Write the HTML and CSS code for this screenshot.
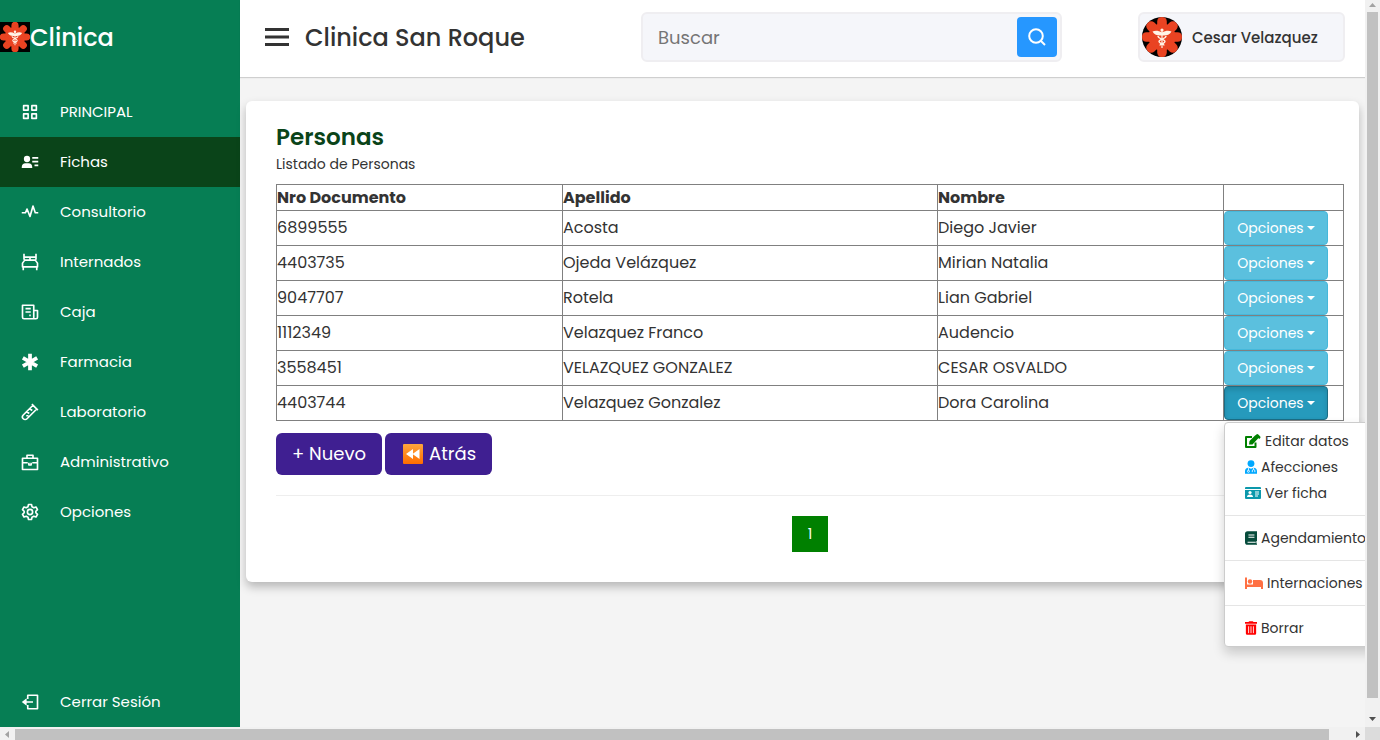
FILE: index.html
```html
<!DOCTYPE html>
<html lang="es">
<head>
<meta charset="utf-8">
<title>Clinica San Roque - Personas</title>
<link rel="stylesheet" href="styles.css">
</head>
<body>
<svg class="defs" aria-hidden="true">
  <symbol id="flower" viewBox="0 0 40 40">
    <rect width="40" height="40" fill="#000"/>
    <g stroke="#e94322" stroke-width="9.6" stroke-linecap="round">
      <path d="M20 4.500v31M4.500 20h31M9 9l22 22M31 9L9 31"/>
    </g>
    <circle cx="20" cy="20" r="13.500" fill="#e94322"/>
    <g fill="#fff3e6">
      <circle cx="20" cy="13" r="1.600"/>
      <path d="M10.500 14.500c3-1.500 6-1 9.500 1 3.500-2 6.500-2.500 9.500-1-1.500 2.500-3.500 4-7.500 4h-4c-4 0-6-1.500-7.500-4z"/>
      <path d="M19.400 14h1.200v17h-1.200z"/>
    </g>
    <path d="M16 19c0 3 7 3 7 5.500s-5 1.500-5 4M24 19c0 3-7 3-7 5.500s5 1.500 5 4" fill="none" stroke="#fff3e6" stroke-width="1.400"/>
  </symbol>
</svg>
<div class="viewport">
  <div class="app">
    <nav class="sidebar" aria-label="Menú principal">
      <div class="brand"><svg class="brand-logo" role="img" aria-label="Logo"><use href="#flower"/></svg><span>Clinica</span></div>
      <ul class="menu">
        <li><a class="link" href="#"><svg class="ico" viewBox="0 0 24 24"><path d="M3.500 3.500h6v6h-6zM14.500 3.500h6v6h-6zM3.500 14.500h6v6h-6zM14.500 14.500h6v6h-6z"/></svg>PRINCIPAL</a></li>
        <li><a class="link active" href="#"><svg class="ico" viewBox="0 0 24 24"><g class="solid"><circle cx="8" cy="8" r="4.200"/><path d="M1 20v-1c0-3.500 2-5.500 5-5.500h4c3 0 5 2 5 5.500v1z"/></g><path d="M15 6.500h8M15 11.500h8M18 16.500h5"/></svg>Fichas</a></li>
        <li><a class="link" href="#"><svg class="ico" viewBox="0 0 24 24"><path d="M1 13h5l2-5 4 10 4-14 3 9h4"/></svg>Consultorio</a></li>
        <li><a class="link" href="#"><svg class="ico" viewBox="0 0 24 24"><path d="M4 1v8M20 1v8M4 5.500h16M12 5.500v4M5 9.500h14l3 4v5H2v-5zM3 18v5M21 18v5"/></svg>Internados</a></li>
        <li><a class="link" href="#"><svg class="ico" viewBox="0 0 24 24"><path d="M2 3h15v18H4q-2 0-2-2zM17 10h5v9q0 2-2 2h-3M6 7.500h7M6 12h7M11 16.500h2"/></svg>Caja</a></li>
        <li><a class="link" href="#"><svg class="ico" viewBox="0 0 24 24"><path class="thick" d="M12 1v22M2.500 6.500l19 11M21.500 6.500l-19 11"/></svg>Farmacia</a></li>
        <li><a class="link" href="#"><svg class="ico" viewBox="0 0 24 24"><path d="M14.500 1.500l8 8M16 3L3 16a3.500 3.500 0 0 0 5 5L21 8M8 12l3 2M12 8l3 2M7 17h3"/></svg>Laboratorio</a></li>
        <li><a class="link" href="#"><svg class="ico" viewBox="0 0 24 24"><path d="M2 7h20v15H2zM8 7V3h8v4M2 13h7M15 13h7M10.500 13v3h3v-3"/></svg>Administrativo</a></li>
        <li><a class="link" href="#"><svg class="ico" viewBox="0 0 24 24"><path d="M10 2h4l.7 3 2.300 1.300 3-1 2 3.500L19.800 11v2l2.200 2.200-2 3.500-3-1-2.300 1.300-.7 3h-4l-.7-3L7 17.700l-3 1-2-3.500L4.200 13v-2L2 8.800l2-3.500 3 1L9.300 5z"/><circle cx="12" cy="12" r="3.500"/></svg>Opciones</a></li>
      </ul>
      <a class="link logout" href="#"><svg class="ico" viewBox="0 0 24 24"><path d="M9 8V3h13v18H9v-5M16 12H3"/><path class="solid" d="M7.500 7v10L1 12z"/></svg>Cerrar Sesión</a>
    </nav>
    <div class="page">
      <header class="topbar">
        <div class="heading">
          <button class="toggle" aria-label="Menú"><svg viewBox="0 0 26 18"><path d="M1 1.500h24M1 9h24M1 16.500h24"/></svg></button>
          <span class="clinic">Clinica San Roque</span>
        </div>
        <form class="search">
          <input type="text" placeholder="Buscar" aria-label="Buscar">
          <button type="button" aria-label="Buscar"><svg viewBox="0 0 20 20"><circle cx="9" cy="9" r="6.800"/><path d="M14 14l4 4"/></svg></button>
        </form>
        <div class="profile"><svg class="avatar" role="img" aria-label="Foto de perfil"><use href="#flower"/></svg><span>Cesar Velazquez</span></div>
      </header>
      <main class="card">
        <h1>Personas</h1>
        <p class="subtitle">Listado de Personas</p>
        <table class="people">
          <colgroup><col class="c-doc"><col><col class="c-name"><col class="c-act"></colgroup>
          <thead><tr><th>Nro Documento</th><th>Apellido</th><th>Nombre</th><th></th></tr></thead>
          <tbody>
            <tr><td>6899555</td><td>Acosta</td><td>Diego Javier</td><td><button class="opt">Opciones<i class="caret"></i></button></td></tr>
            <tr><td>4403735</td><td>Ojeda Velázquez</td><td>Mirian Natalia</td><td><button class="opt">Opciones<i class="caret"></i></button></td></tr>
            <tr><td>9047707</td><td>Rotela</td><td>Lian Gabriel</td><td><button class="opt">Opciones<i class="caret"></i></button></td></tr>
            <tr><td>1112349</td><td>Velazquez Franco</td><td>Audencio</td><td><button class="opt">Opciones<i class="caret"></i></button></td></tr>
            <tr><td>3558451</td><td>VELAZQUEZ GONZALEZ</td><td>CESAR OSVALDO</td><td><button class="opt">Opciones<i class="caret"></i></button></td></tr>
            <tr><td>4403744</td><td>Velazquez Gonzalez</td><td>Dora Carolina</td><td>
              <div class="dropdown">
                <button class="opt open" aria-expanded="true">Opciones<i class="caret"></i></button>
                <ul class="dropdown-menu">
                  <li><a href="#"><svg class="w16 green" viewBox="0 0 16 14"><path d="M10.500 8.500V13H1V3h6" fill="none" stroke="currentColor" stroke-width="2" stroke-linejoin="round"/><path d="M4 10.500l.5-3.500 6-6 3 3-6 6.500zM11.300.6q1-1 2 0l1.700 1.700q1 1 0 2L14.300 5l-3.500-3.500z"/></svg>Editar datos</a></li>
                  <li><a href="#"><svg class="w13 sky" viewBox="0 0 14 16"><circle cx="7" cy="4" r="4"/><path d="M0 16v-3c0-2.500 1.500-4 4-4l3 1 3-1c2.500 0 4 1.500 4 4v3z"/><path d="M4 9v3M10 9v2M8.500 14v-1.500q0-1.500 1.500-1.500t1.500 1.500V14" fill="none" stroke="#fff"/><circle cx="4" cy="13" r="1.200" fill="none" stroke="#fff"/></svg>Afecciones</a></li>
                  <li><a href="#"><svg class="w16 teal" viewBox="0 0 16 14"><path d="M1 1h14q1 0 1 1v10q0 1-1 1H1q-1 0-1-1V2q0-1 1-1z"/><path d="M0 3.500h16M10 6h4M10 8h4M10 10h3" stroke="#fff"/><circle cx="5" cy="6.500" r="1.600" fill="#fff"/><path d="M2 11q0-2.500 3-2.500T8 11z" fill="#fff"/></svg>Ver ficha</a></li>
                  <li class="divider"></li>
                  <li><a href="#"><svg class="w13 forest" viewBox="0 0 14 16"><path d="M3 0h11v11.500h-.7v3h.7V16H3q-3 0-3-3V3q0-3 3-3z"/><path d="M4 4.500h7M4 7h7M3 13h9.500" stroke="#fff" stroke-width="1.200"/></svg>Agendamiento</a></li>
                  <li class="divider"></li>
                  <li><a href="#"><svg class="w18 coral" viewBox="0 0 18 14"><path d="M0 1.500h2v7h6V4h7q3 0 3 3v6h-2v-2H2v2H0z"/><circle cx="5" cy="5.500" r="2.200"/></svg>Internaciones</a></li>
                  <li class="divider"></li>
                  <li><a href="#"><svg class="w13 red" viewBox="0 0 14 16"><path d="M0 1h4l1-1h4l1 1h4v2H0zM1 4h12v10.500q0 1.500-1.500 1.500h-9Q1 16 1 14.500z"/><path d="M4.200 6v8M7 6v8M9.800 6v8" stroke="#fff"/></svg>Borrar</a></li>
                </ul>
              </div>
            </td></tr>
          </tbody>
        </table>
        <div class="actions">
          <a class="btn" href="#">+ Nuevo</a>
          <a class="btn" href="#"><svg class="rewind" viewBox="0 0 20 20"><defs><linearGradient id="og" x2="0" y2="1"><stop stop-color="#ffa63d"/><stop offset="1" stop-color="#ff6d00"/></linearGradient></defs><rect width="20" height="20" rx="1" fill="url(#og)"/><path d="M10 5v10l-7-5zM16.500 5v10l-7-5z" fill="#fff"/></svg>Atrás</a>
        </div>
        <div class="pager"><a href="#" aria-current="page">1</a></div>
      </main>
    </div>
  </div>
  <div class="vbar" aria-hidden="true">
    <svg viewBox="0 0 15 12"><path d="M7.500 3l3.500 4H4z" fill="#a3a3a3"/></svg>
    <div class="thumb"></div>
    <svg viewBox="0 0 15 12"><path d="M7.500 8L11 4H4z" fill="#505050"/></svg>
  </div>
  <div class="hbar" aria-hidden="true">
    <svg viewBox="0 0 15 13"><path d="M5 7.500L9 4v7z" fill="#a3a3a3"/></svg>
    <div class="thumb"></div>
    <svg viewBox="0 0 15 13"><path d="M10 7.500L6 4v7z" fill="#505050"/></svg>
  </div>
  <div class="corner"></div>
</div>
</body>
</html>
```
FILE: styles.css
```css
* { box-sizing: border-box; margin: 0; padding: 0; }
body { font-family: Poppins, Inter, sans-serif; font-size: 16px; color: #333; background: #f4f4f4; }
ul { list-style: none; }
a { text-decoration: none; color: inherit; }
button, input { font: inherit; border: 0; }
.defs { position: absolute; width: 0; height: 0; }

.viewport { display: grid; grid-template-columns: minmax(0, 1fr) 15px; grid-template-rows: minmax(0, 1fr) 13px; height: 100vh; }
.app { display: flex; overflow: hidden; }

.sidebar { flex: none; width: 240px; display: flex; flex-direction: column; background: #067e54; color: #fff; }
.brand { display: flex; align-items: center; height: 74px; margin-bottom: 13px; font-size: 24px; font-weight: 500; }
.brand-logo { width: 30px; height: 30px; }
.link { display: flex; align-items: center; height: 50px; padding-bottom: 1px; font-size: 15px; }
.link.active { background: #0a4419; }
.logout { margin-top: auto; }
.ico { width: 18px; height: 18px; margin: 0 21px; fill: none; stroke: #fff; stroke-width: 2.2; stroke-linejoin: round; flex: none; }
.ico .solid { fill: #fff; stroke: none; }
.ico .thick { stroke-width: 5; }

.page { flex: 1; min-width: 0; }
.topbar { display: flex; align-items: center; gap: 76px; padding: 12px 20px 15px; background: #fff; box-shadow: 0 1px 1px rgba(0, 0, 0, .15); }
.heading { display: flex; align-items: center; min-width: 305px; }
.toggle { width: 34px; height: 34px; margin-right: 11px; background: none; display: flex; align-items: center; justify-content: center; }
.toggle svg { width: 26px; height: 18px; fill: none; stroke: #333; stroke-width: 3; }
.clinic { font-size: 24px; font-weight: 500; white-space: nowrap; }
.search { flex: 1; min-width: 0; display: flex; align-items: center; height: 50px; padding: 0 3px 0 0; background: #f5f6fa; border: 2px solid #efeef1; border-radius: 6px; }
.search input { flex: 1; min-width: 0; height: 46px; padding: 0 15px; font-size: 18px; background: none; }
.search input::placeholder { color: #757575; }
.search button { display: flex; align-items: center; justify-content: center; width: 40px; height: 40px; background: #2697ff; border-radius: 4px; }
.search button svg { width: 20px; height: 20px; fill: none; stroke: #fff; stroke-width: 2; }
.profile { display: flex; align-items: center; gap: 10px; min-width: 207px; height: 50px; padding: 0 2px; background: #f5f6fa; border: 2px solid #efeef1; border-radius: 6px; font-size: 15px; font-weight: 500; }
.avatar { width: 40px; height: 40px; border-radius: 50%; }

.card { margin: 24px 6px; padding: 19px 15px 30px 30px; background: #fff; border-radius: 6px; box-shadow: 0 5px 10px rgba(0, 0, 0, .25); }
h1 { font-size: 23px; line-height: 34px; font-weight: 600; color: #0a4419; }
.subtitle { font-size: 14px; line-height: 20px; margin-bottom: 10px; }
.people { width: 100%; table-layout: fixed; border-collapse: collapse; line-height: 25px; }
.people th, .people td { border: 1px solid #808080; text-align: left; vertical-align: middle; }
.people td:not(:last-child) { padding-bottom: 2px; }
.people th { font-weight: 700; }
.c-doc, .c-name { width: 26.8%; }
.c-act { width: 120px; }
.opt { display: flex; align-items: center; justify-content: center; gap: 3px; width: 104px; height: 34px; font-size: 14px; color: #fff; background: #5bc0de; border: 1px solid #46b8da; border-radius: 4px; }
.opt.open { background: #269abc; border-color: #1b6d85; box-shadow: inset 0 3px 5px rgba(0, 0, 0, .13); }
.caret { border: 4px solid transparent; border-top-color: #fff; border-bottom: 0; }
.dropdown { position: relative; }
.dropdown-menu { position: absolute; top: 36px; left: 0; z-index: 2; min-width: 160px; padding: 5px 0; background: #fff; border: 1px solid #ccc; border-radius: 4px; box-shadow: 0 6px 12px rgba(0, 0, 0, .18); font-size: 14px; line-height: 20px; }
.dropdown-menu a { display: flex; align-items: center; gap: 4px; padding: 3px 20px; white-space: nowrap; }
.dropdown-menu svg { height: 14px; fill: currentColor; flex: none; }
.dropdown-menu .divider { height: 1px; margin: 9px 0; background: #e5e5e5; }
.w13 { width: 12px; }
.w16 { width: 16px; }
.w18 { width: 18px; }
.green { color: #008000; }
.sky { color: #00a8ff; }
.teal { color: #0c98ab; }
.forest { color: #064b3b; }
.coral { color: #ff7043; }
.red { color: #f00; }
.actions { display: flex; gap: 3px; margin-top: 12px; padding-bottom: 20px; border-bottom: 1px solid #eee; }
.btn { display: flex; align-items: center; gap: 6px; height: 42px; padding: 0 16px 1px; font-size: 18px; color: #fff; background: #3f1f91; border-radius: 6px; }
.rewind { width: 20px; height: 20px; margin-left: 2px; }
.pager { display: flex; justify-content: center; margin-top: 20px; }
.pager a { width: 36px; font-size: 14px; line-height: 36px; text-align: center; color: #fff; background: #008000; }

.vbar, .hbar { display: flex; background: #f1f1f1; }
.vbar { flex-direction: column; padding-bottom: 2px; }
.vbar svg { width: 15px; height: 12px; }
.vbar .thumb { flex: 0 1 686px; margin: 0 2px; background: #c1c1c1; }
.vbar svg:last-child { margin-top: auto; }
.hbar svg { width: 15px; height: 13px; }
.hbar .thumb { width: 1314px; margin: 2px 0 0; background: #c1c1c1; }
.hbar svg:last-child { margin-left: auto; }
.corner { background: #dcdcdc; }
```
